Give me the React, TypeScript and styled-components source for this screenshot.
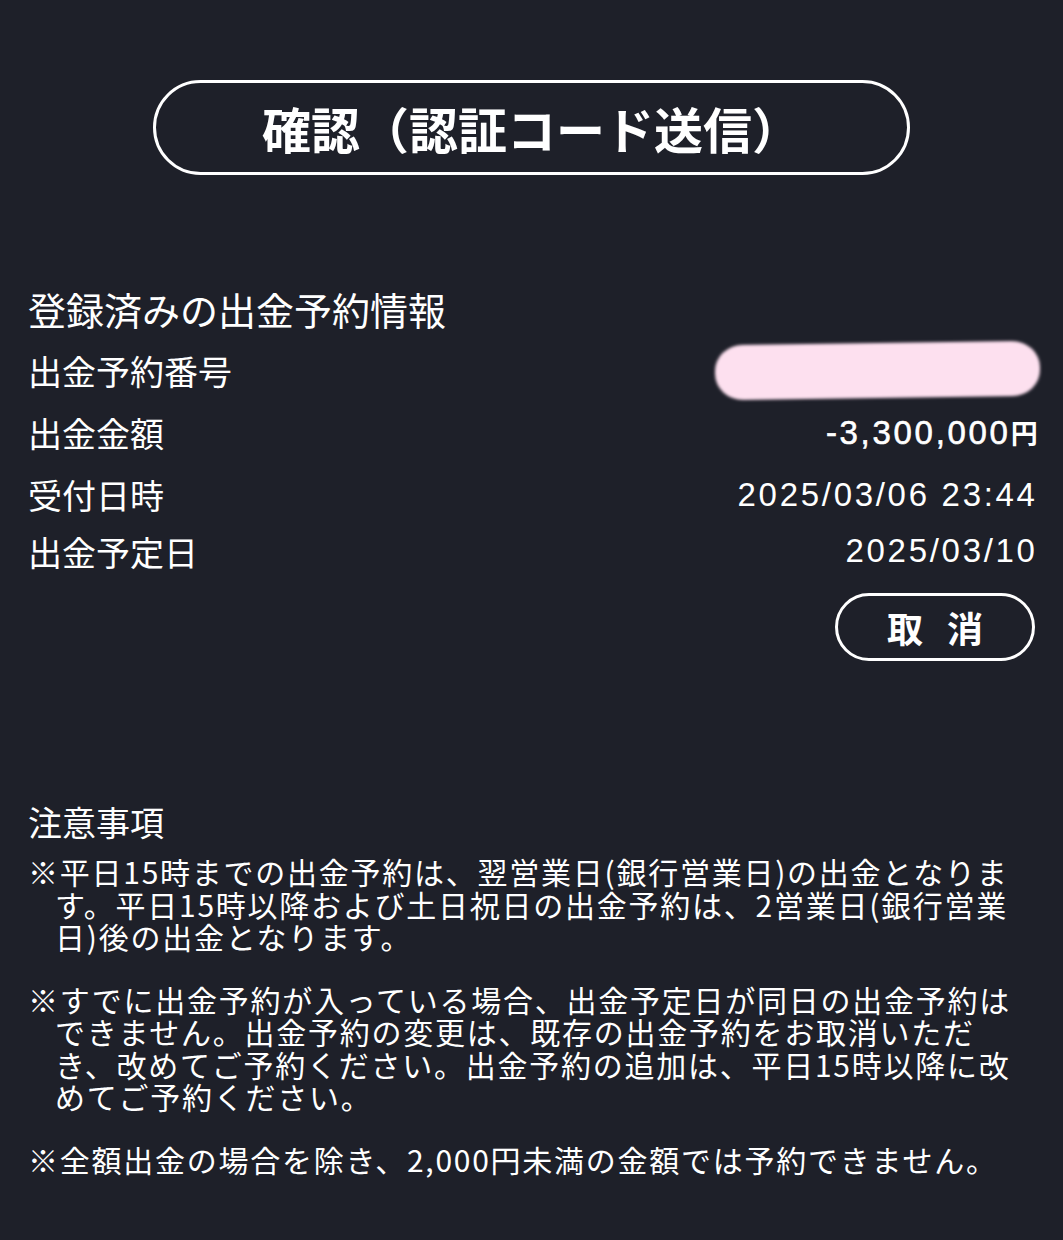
import React from 'react';
import styled, { createGlobalStyle, css } from 'styled-components';

const GlobalStyle = createGlobalStyle`
  body {
    margin: 0;
    background: #1e2029;
    color: #ffffff;
    font-family: "Noto Sans CJK JP", "Noto Sans", sans-serif;
  }
`;

const Page = styled.main`
  padding: 80px 28px 40px;
`;

const TitleButton = styled.button`
  display: block;
  width: 757px;
  height: 95px;
  margin: 0 auto;
  border: 3px solid #ffffff;
  border-radius: 48px;
  background: transparent;
  color: #ffffff;
  font-family: "Noto Sans CJK JP", sans-serif;
  font-size: 49px;
  font-weight: 700;
  padding: 0;
`;

const InfoSection = styled.section`
  margin-top: 102px;
`;

const SectionHeading = styled.h2`
  margin: 0;
  height: 62px;
  display: flex;
  align-items: center;
  font-size: 38px;
  font-weight: 400;
`;

const Row = styled.div<{ $h: number }>`
  display: flex;
  justify-content: space-between;
  align-items: center;
  height: ${(p) => p.$h}px;
`;

const Label = styled.span`
  font-size: 34px;
`;

const Value = styled.span<{ $strong?: boolean }>`
  font-family: "Liberation Sans", Arial, sans-serif;
  font-size: 33px;
  letter-spacing: 2.7px;
  margin-right: -2.7px;
  ${(p) =>
    p.$strong &&
    css`
      -webkit-text-stroke: 0.6px #ffffff;
    `}
`;

const Yen = styled.span`
  font-family: "Noto Sans CJK JP", sans-serif;
  font-size: 27px;
  font-weight: 700;
  letter-spacing: 0;
  -webkit-text-stroke: 0;
`;

const Redacted = styled.div`
  width: 325px;
  height: 55px;
  margin-right: -5px;
  background: #fde0ef;
  border-radius: 28px / 26px;
  filter: blur(1.6px);
  transform: rotate(-0.8deg);
`;

const CancelRow = styled.div`
  display: flex;
  justify-content: flex-end;
  margin-top: 17px;
`;

const CancelButton = styled.button`
  width: 200px;
  height: 68px;
  border: 3px solid #ffffff;
  border-radius: 34px;
  background: transparent;
  color: #ffffff;
  font-family: "Noto Sans CJK JP", sans-serif;
  font-size: 36px;
  font-weight: 700;
  letter-spacing: 8px;
  text-indent: 8px;
  padding: 0;
`;

const NotesSection = styled.section`
  margin-top: 136px;
`;

const NotesHeading = styled.h3`
  margin: 0;
  font-size: 34px;
  font-weight: 400;
  line-height: 50px;
`;

const Note = styled.p`
  margin: 30px 0 0;
  padding-left: 27px;
  text-indent: -27px;
  font-size: 30px;
  line-height: 32.5px;
  letter-spacing: 1.75px;
  white-space: nowrap;
  ${NotesHeading} + & {
    margin-top: 8px;
  }
`;

const rows = [
  { label: '出金予約番号', h: 62, value: null },
  { label: '出金金額', h: 62, value: 'amount' },
  { label: '受付日時', h: 63, value: '2025/03/06 23:44' },
  { label: '出金予定日', h: 50, value: '2025/03/10' },
];

export default function App() {
  return (
    <>
      <GlobalStyle />
      <Page>
        <TitleButton>確認（認証コード送信）</TitleButton>

        <InfoSection>
          <SectionHeading>登録済みの出金予約情報</SectionHeading>
          {rows.map((r) => (
            <Row key={r.label} $h={r.h}>
              <Label>{r.label}</Label>
              {r.value === null && <Redacted />}
              {r.value === 'amount' && (
                <Value $strong>
                  -3,300,000<Yen>円</Yen>
                </Value>
              )}
              {r.value && r.value !== 'amount' && <Value>{r.value}</Value>}
            </Row>
          ))}
          <CancelRow>
            <CancelButton>取 消</CancelButton>
          </CancelRow>
        </InfoSection>

        <NotesSection>
          <NotesHeading>注意事項</NotesHeading>
          <Note>
            ※平日15時までの出金予約は、翌営業日(銀行営業日)の出金となりま
            <br />
            す。平日15時以降および土日祝日の出金予約は、2営業日(銀行営業
            <br />
            日)後の出金となります。
          </Note>
          <Note>
            ※すでに出金予約が入っている場合、出金予定日が同日の出金予約は
            <br />
            できません。出金予約の変更は、既存の出金予約をお取消いただ
            <br />
            き、改めてご予約ください。出金予約の追加は、平日15時以降に改
            <br />
            めてご予約ください。
          </Note>
          <Note>※全額出金の場合を除き、2,000円未満の金額では予約できません。</Note>
        </NotesSection>
      </Page>
    </>
  );
}
